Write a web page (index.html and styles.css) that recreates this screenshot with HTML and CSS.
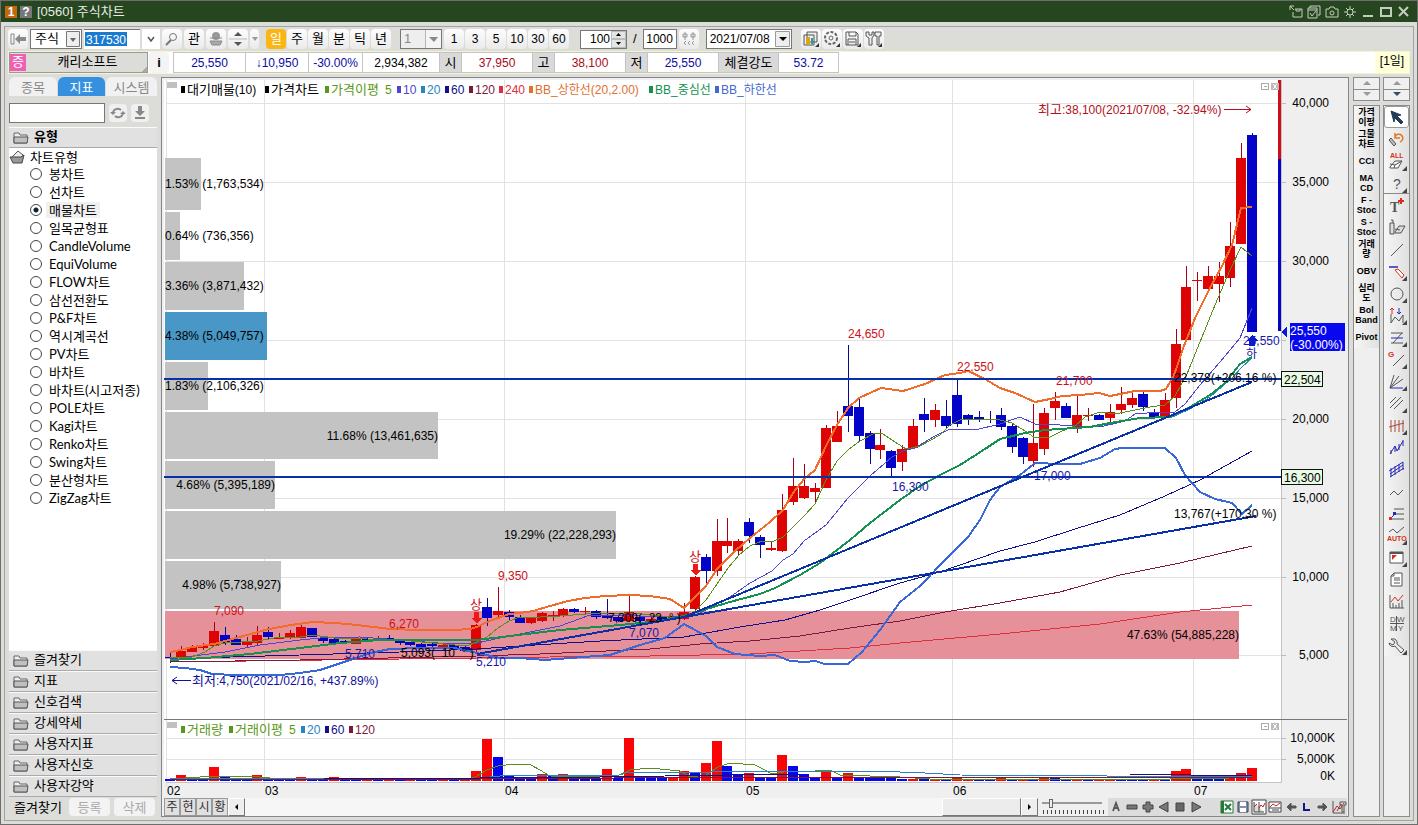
FILE: index.html
```html
<!DOCTYPE html>
<html lang="ko">
<head>
<meta charset="utf-8">
<title>[0560] 주식차트</title>
<link rel="stylesheet" href="styles.css">
</head>
<body>
<div class="window">
  <header class="titlebar">
    <span class="badge badge-num">1</span><span class="badge badge-help">?</span>
    <h1>[0560] 주식차트</h1>
    <div class="win-tools">
      <svg width="14" height="14" viewBox="0 0 14 14"><path d="M1 5V1h4M1 1l4 4M6 4h7v8H4V7M7 4v2h4V4"/></svg>
      <svg width="14" height="14" viewBox="0 0 14 14"><path d="M3 3V1h10v9h-2M1 3h9v10H1zM1 5h9M3 8l2 3 4-5"/></svg>
      <svg width="14" height="14" viewBox="0 0 14 14"><path d="M1 4h3l1-2h4l1 2h3v8H1z"/><circle cx="7" cy="8" r="2"/></svg>
      <svg width="14" height="14" viewBox="0 0 14 14"><circle cx="7" cy="7" r="3"/><path d="M7 1v3M7 10v3M1 7h3M10 7h3M3 3l2 2M9 9l2 2M11 3L9 5M5 9l-2 2"/></svg>
      <svg class="wide" width="14" height="14" viewBox="0 0 14 14"><path d="M2 11h10"/></svg>
      <svg class="wide" width="14" height="14" viewBox="0 0 14 14"><path d="M2 3h10v8H2z"/></svg>
      <svg class="wide" width="14" height="14" viewBox="0 0 14 14"><path d="M2 2l9 9M11 2l-9 9"/></svg>
    </div>
  </header>
  <div class="frame">
    <div class="toolbar">
      <button class="tb" aria-label="처음"><svg width="16" height="14" viewBox="0 0 16 14"><path d="M1 2h3v10H1z" fill="none" stroke="#888"/><path d="M5 7l5-5v3h6v4h-6v3z" fill="#8a8a8a"/></svg></button>
      <select class="kind" aria-label="종류"><option>주식</option></select>
      <input class="code" aria-label="종목코드" value="317530">
      <button class="tb drop" aria-label="목록"><svg width="10" height="8" viewBox="0 0 10 8"><path d="M2 2l3 4 3-4" fill="none" stroke="#555" stroke-width="1.500"/></svg></button>
      <button class="tb" aria-label="검색"><svg width="14" height="14" viewBox="0 0 14 14"><circle cx="8" cy="5" r="3.500" fill="none" stroke="#777"/><path d="M6 8l-5 5" stroke="#777" stroke-width="2"/></svg></button>
      <button class="tb">관</button>
      <button class="tb" aria-label="전문가"><svg width="16" height="16" viewBox="0 0 16 16"><circle cx="8" cy="5" r="4" fill="#999"/><path d="M2 7h12" stroke="#888"/><path d="M2 10h12l-2 4H4z" fill="#aaa" stroke="#888"/></svg></button>
      <button class="tb" aria-label="위아래"><svg width="18" height="16" viewBox="0 0 18 16"><path d="M9 1l4 4H5zM9 15l4-4H5z" fill="#555"/><path d="M0 8h18" stroke="#bbb"/></svg></button>
      <button class="tb mini" aria-label="더보기"><svg width="8" height="6" viewBox="0 0 8 6"><path d="M1 1h6L4 5z" fill="#999"/></svg></button>
      <div class="group period">
        <button class="tb on">일</button><button class="tb">주</button><button class="tb">월</button><button class="tb">분</button><button class="tb">틱</button><button class="tb">년</button>
      </div>
      <select class="unit" aria-label="단위" disabled><option>1</option></select>
      <div class="group nums">
        <button class="tb">1</button><button class="tb">3</button><button class="tb">5</button><button class="tb">10</button><button class="tb">30</button><button class="tb">60</button>
      </div>
      <div class="spin"><input aria-label="표시 개수" value="100"><span class="steps"><button aria-label="증가"><svg width="7" height="4" viewBox="0 0 7 4"><path d="M1 3h5L3.500 0z"/></svg></button><button aria-label="감소"><svg width="7" height="4" viewBox="0 0 7 4"><path d="M1 1h5L3.500 4z"/></svg></button></span></div>
      <span class="slash">/</span>
      <input class="total" aria-label="전체 개수" value="1000">
      <button class="tb" aria-label="간격"><svg width="16" height="16" viewBox="0 0 16 16"><path d="M4 1v8M2 3h4v3H2zM12 1v8M10 3h4v3h-4zM5 10l-2 2 2 2M9 10l-2 2 2 2M13 10l-2 2 2 2" fill="none" stroke="#999"/></svg></button>
      <select class="date" aria-label="날짜"><option>2021/07/08</option></select>
      <div class="group tools">
        <button class="tb" aria-label="차트 복사"><svg width="18" height="18" viewBox="0 0 18 18"><path d="M5 2h10v10H5zM2 5h10v10H2z" fill="#eee" stroke="#555"/><path d="M5 9v5M7 7v7" stroke="#e8a500" stroke-width="2"/><path d="M10 8v6" stroke="#19a0b0" stroke-width="2"/><path d="M17 13v4h-4z" fill="#333"/></svg></button>
        <button class="tb" aria-label="설정"><svg width="18" height="18" viewBox="0 0 18 18"><circle cx="8" cy="8" r="6" fill="none" stroke="#666" stroke-width="2" stroke-dasharray="3 1.500"/><circle cx="8" cy="8" r="2" fill="none" stroke="#666"/><path d="M17 13v4h-4z" fill="#333"/></svg></button>
        <button class="tb" aria-label="저장"><svg width="18" height="18" viewBox="0 0 18 18"><path d="M2 2h10l2 2v11H2zM5 2v4h7V2M4 15V9h8v6M5 12h6" fill="none" stroke="#555"/><path d="M17 13v4h-4z" fill="#333"/></svg></button>
        <button class="tb" aria-label="도구"><svg width="18" height="18" viewBox="0 0 18 18"><path d="M1 2v4l3 2v7h3V8l2-3V2H7v3H4V2zM10 2h6v4h-2v9h-2V6h-2z" fill="#eee" stroke="#555"/><path d="M17 13v4h-4z" fill="#333"/></svg></button>
      </div>
    </div>

    <div class="inforow">
      <div class="stock"><span class="tag">증</span><span class="name">캐리소프트</span></div>
      <button class="info">i</button>
      <div class="quote">
        <span class="c72 blue">25,550</span><span class="c63 blue">↓10,950</span><span class="c54 blue">-30.00%</span><span class="c77">2,934,382</span><b class="c22">시</b><span class="c71 red">37,950</span><b class="c22">고</b><span class="c71 red">38,100</span><b class="c22">저</b><span class="c71 blue">25,550</span><b class="c60">체결강도</b><span class="c60 blue">53.72</span>
      </div>
      <span class="term">[1일]</span>
    </div>

    <main class="main">
      <aside class="side">
        <nav class="tabs"><button>종목</button><button class="on">지표</button><button>시스템</button></nav>
        <div class="find">
          <input aria-label="지표 검색">
          <button aria-label="새로고침"><svg width="16" height="14" viewBox="0 0 16 14"><path d="M3 6a5 5 0 0 1 8-2M13 8a5 5 0 0 1-8 2" fill="none" stroke="#888" stroke-width="2"/><path d="M0 6h6L3 9zM10 8h6l-3-3z" fill="#888"/></svg></button>
          <button aria-label="내려받기"><svg width="14" height="16" viewBox="0 0 14 16"><path d="M5 1h4v5h3l-5 5-5-5h3z" fill="#888"/><path d="M2 13h10" stroke="#888" stroke-width="2"/></svg></button>
        </div>
        <h2 class="acc first"><svg class="folder" width="16" height="13" viewBox="0 0 16 13"><path d="M1 12V2h5l1 2h7v8z" fill="#eee" stroke="#666"/><path d="M1 12V6h14l-1 6z" fill="#c0c0c0" stroke="#555"/></svg>유형</h2>
        <div class="tree">
          <p class="root"><svg width="16" height="14" viewBox="0 0 16 14"><path d="M3 7l6-6 5 4-2 5z" fill="#eee" stroke="#555"/><path d="M1 7h11l3-2-2 8H4z" fill="#999" stroke="#444"/></svg>차트유형</p>
          <label><input type="radio" name="type"><span>봉차트</span></label>
          <label><input type="radio" name="type"><span>선차트</span></label>
          <label><input type="radio" name="type" checked><span class="sel">매물차트</span></label>
          <label><input type="radio" name="type"><span>일목균형표</span></label>
          <label><input type="radio" name="type"><span>CandleVolume</span></label>
          <label><input type="radio" name="type"><span>EquiVolume</span></label>
          <label><input type="radio" name="type"><span>FLOW차트</span></label>
          <label><input type="radio" name="type"><span>삼선전환도</span></label>
          <label><input type="radio" name="type"><span>P&amp;F차트</span></label>
          <label><input type="radio" name="type"><span>역시계곡선</span></label>
          <label><input type="radio" name="type"><span>PV차트</span></label>
          <label><input type="radio" name="type"><span>바차트</span></label>
          <label><input type="radio" name="type"><span>바차트(시고저종)</span></label>
          <label><input type="radio" name="type"><span>POLE차트</span></label>
          <label><input type="radio" name="type"><span>Kagi차트</span></label>
          <label><input type="radio" name="type"><span>Renko차트</span></label>
          <label><input type="radio" name="type"><span>Swing차트</span></label>
          <label><input type="radio" name="type"><span>분산형차트</span></label>
          <label><input type="radio" name="type"><span>ZigZag차트</span></label>
        </div>
        <h2 class="acc"><svg class="folder" width="16" height="13" viewBox="0 0 16 13"><path d="M1 12V2h5l1 2h7v8z" fill="#eee" stroke="#666"/><path d="M1 12V6h14l-1 6z" fill="#c0c0c0" stroke="#555"/></svg>즐겨찾기</h2>
        <h2 class="acc"><svg class="folder" width="16" height="13" viewBox="0 0 16 13"><path d="M1 12V2h5l1 2h7v8z" fill="#eee" stroke="#666"/><path d="M1 12V6h14l-1 6z" fill="#c0c0c0" stroke="#555"/></svg>지표</h2>
        <h2 class="acc"><svg class="folder" width="16" height="13" viewBox="0 0 16 13"><path d="M1 12V2h5l1 2h7v8z" fill="#eee" stroke="#666"/><path d="M1 12V6h14l-1 6z" fill="#c0c0c0" stroke="#555"/></svg>신호검색</h2>
        <h2 class="acc"><svg class="folder" width="16" height="13" viewBox="0 0 16 13"><path d="M1 12V2h5l1 2h7v8z" fill="#eee" stroke="#666"/><path d="M1 12V6h14l-1 6z" fill="#c0c0c0" stroke="#555"/></svg>강세약세</h2>
        <h2 class="acc"><svg class="folder" width="16" height="13" viewBox="0 0 16 13"><path d="M1 12V2h5l1 2h7v8z" fill="#eee" stroke="#666"/><path d="M1 12V6h14l-1 6z" fill="#c0c0c0" stroke="#555"/></svg>사용자지표</h2>
        <h2 class="acc"><svg class="folder" width="16" height="13" viewBox="0 0 16 13"><path d="M1 12V2h5l1 2h7v8z" fill="#eee" stroke="#666"/><path d="M1 12V6h14l-1 6z" fill="#c0c0c0" stroke="#555"/></svg>사용자신호</h2>
        <h2 class="acc"><svg class="folder" width="16" height="13" viewBox="0 0 16 13"><path d="M1 12V2h5l1 2h7v8z" fill="#eee" stroke="#666"/><path d="M1 12V6h14l-1 6z" fill="#c0c0c0" stroke="#555"/></svg>사용자강약</h2>
        <div class="favs"><span>즐겨찾기</span><button disabled>등록</button><button disabled>삭제</button></div>
      </aside>

      <section class="panel">
        <svg id="chart" class="chart" viewBox="164 80 1183 718" role="img" aria-label="캐리소프트 일봉 차트"></svg>
        <div class="bottombar">
          <div class="modes"><button>주</button><button>현</button><button>시</button><button>황</button></div>
          <button class="arrow" aria-label="왼쪽"><svg width="5" height="8" viewBox="0 0 5 8"><path d="M4 1v6L1 4z"/></svg></button>
          <div class="track"><span class="thumb"></span></div>
          <button class="arrow" aria-label="오른쪽"><svg width="5" height="8" viewBox="0 0 5 8"><path d="M1 1v6l3-3z"/></svg></button>
          <div class="zoomer"><input type="range" aria-label="확대" value="12"></div>
          <div class="icons left">
            <svg width="16" height="16" viewBox="0 0 16 16"><path d="M5 12l3-8 3 8M6 9h4" fill="none" stroke="#555" stroke-width="1.800"/></svg>
            <svg width="16" height="16" viewBox="0 0 16 16"><path d="M3 6h10v4H3z" fill="#777" stroke="#444"/></svg>
            <svg width="16" height="16" viewBox="0 0 16 16"><path d="M6 3h4v3h3v4h-3v3H6v-3H3V6h3z" fill="#777" stroke="#444"/></svg>
            <svg width="16" height="16" viewBox="0 0 16 16"><path d="M12 3v10L3 8z" fill="#777" stroke="#444"/></svg>
            <svg width="16" height="16" viewBox="0 0 16 16"><path d="M4 4h8v8H4z" fill="#666" stroke="#444"/></svg>
            <svg width="16" height="16" viewBox="0 0 16 16"><path d="M4 3v10l9-5z" fill="#777" stroke="#444"/></svg>
          </div>
          <div class="icons right">
            <svg width="16" height="16" viewBox="0 0 16 16"><path d="M2 2h12v12H2z" fill="#fff" stroke="#257a35"/><path d="M2 2h3v12H2z" fill="#257a35"/><path d="M6 5l6 6M12 5l-6 6" stroke="#257a35" stroke-width="2"/></svg>
            <svg width="16" height="16" viewBox="0 0 16 16"><path d="M3 3h10v10H3z" fill="#8292ad" stroke="#333f55"/><path d="M5 3h6v4H5zM5 9h6v4H5z" fill="#fff"/></svg>
            <svg width="16" height="16" viewBox="0 0 16 16"><path d="M1 1h14v14H1zM3 3v10h10M8 3v10" fill="#fff" stroke="#444"/><path d="M3 8l3-3M8 9l2-3 2 2 2-4" fill="none" stroke="#d02020"/></svg>
            <svg width="16" height="16" viewBox="0 0 16 16"><path d="M2 3h12v10H2zM2 9h12M5 11h7" fill="#fff" stroke="#444"/><path d="M3 8l3-3 3 2 4-3" fill="none" stroke="#d02020"/></svg>
            <svg width="16" height="16" viewBox="0 0 16 16"><path d="M4 8l4-4v3h5v2H8v3z" fill="#555" stroke="#555"/></svg>
            <svg width="16" height="16" viewBox="0 0 16 16"><path d="M5 4v7h6" fill="none" stroke="#14148c" stroke-width="2"/></svg>
            <svg width="16" height="16" viewBox="0 0 16 16"><path d="M12 8L8 4v3H3v2h5v3z" fill="#555" stroke="#555"/></svg>
            <svg width="16" height="16" viewBox="0 0 16 16"><path d="M2 2v12h12M6 12l4-7M9 3h6v3h-2v7h-2V6H9z" fill="none" stroke="#555"/><path d="M2 13l4-6 3 3 4-6" fill="none" stroke="#d02020"/></svg>
          </div>
        </div>
      </section>

      <div class="rail words">
        <div class="pager"><button aria-label="위"><svg width="10" height="5" viewBox="0 0 10 5"><path d="M1 4h8L5 0z" fill="#999"/></svg></button><button aria-label="아래"><svg width="10" height="5" viewBox="0 0 10 5"><path d="M1 0h8L5 4z" fill="#999"/></svg></button></div>
        <div class="list">
          <button>가격<br>이평</button><button>그물<br>차트</button><button>CCI</button><button>MA<br>CD</button><button>F -<br>Stoc</button><button>S -<br>Stoc</button><button>거래<br>량</button><button>OBV</button><button>심리<br>도</button><button>Bol<br>Band</button><button>Pivot</button>
        </div>
      </div>
      <div class="rail draw">
        <div class="pager"><button aria-label="위"><svg width="10" height="5" viewBox="0 0 10 5"><path d="M1 4h8L5 0z" fill="#999"/></svg></button><button aria-label="아래"><svg width="10" height="5" viewBox="0 0 10 5"><path d="M1 0h8L5 4z" fill="#334a6a"/></svg></button></div>
        <div class="list" id="drawTools"></div>
      </div>
    </main>
  </div>
</div>
<script src="chart.js"></script>
</body>
</html>
```

FILE: styles.css
```css
* { box-sizing: border-box; }
body {
  margin: 0;
  font: 12px/16px "Liberation Sans", "Noto Sans CJK KR", sans-serif;
  color: #000;
}
button, input, select { font: inherit; color: inherit; margin: 0; padding: 0; border-radius: 0; }
button { border: 0; background: none; display: flex; align-items: center; justify-content: center; }
svg { display: block; flex: none; }

.window { display: flex; flex-direction: column; min-height: 100vh; border: 1px solid #6e6e6e; background: #dcdcd8; }
.titlebar { display: flex; align-items: center; height: 21px; padding: 0 6px 0 4px; background: #25461e; color: #e8ece6; }
.badge { width: 12px; height: 12px; margin-right: 3px; font-weight: bold; line-height: 12px; text-align: center; color: #fff; }
.badge-num { background: #c4680e; }
.badge-help { background: #777; }
.titlebar h1 { margin: 0 0 0 2px; font-size: 13px; font-weight: normal; }
.win-tools { display: flex; gap: 4px; margin-left: auto; }
.win-tools svg { fill: none; stroke: #c5cdc0; }
.win-tools .wide { stroke-width: 2; }

.frame { flex: 1; display: flex; flex-direction: column; margin: 4px 3px 3px; padding: 0 3px 3px; border: 1px solid #a2a2a2; }

.toolbar { display: flex; align-items: center; height: 24px; gap: 2px; font-size: 13px; }
.tb { width: 20px; height: 20px; border-radius: 4px; background: linear-gradient(#fdfdfd, #eaeaea); }
.nums .tb { font-size: 12px; }
.tb.on { background: #fbb614; color: #fff; }
.group { display: flex; gap: 1px; }
.period { margin-left: 5px; }
.toolbar .drop { width: 18px; background: #fff; border-radius: 0; }
.toolbar .mini { width: 9px; }
select { appearance: none; border: 1px solid #777; background-color: #fff; height: 20px; }
select.kind { width: 52px; padding-left: 4px; background: #fff url("data:image/svg+xml,%3Csvg xmlns='http://www.w3.org/2000/svg' width='14' height='16'%3E%3Cpath d='M.5.500h13v15H.5z' fill='%23eee' stroke='%23777'/%3E%3Cpath d='M4 7h6l-3 4z' fill='%23666'/%3E%3C/svg%3E") no-repeat right 1px center; }
.code { width: 56px; height: 20px; padding-left: 2px; border: 0; border-top: 1px solid #777; background: linear-gradient(#1a7ad0, #1a7ad0) no-repeat 1px 2px / 42px 14px #fff; color: #fff; font-size: 12px; }
select.unit { width: 42px; margin-left: 7px; padding-left: 3px; opacity: 1; color: #888; background: #eee url("data:image/svg+xml,%3Csvg xmlns='http://www.w3.org/2000/svg' width='16' height='18'%3E%3Cpath d='M0 0h16v18H0z' fill='%23f4f4f4'/%3E%3Cpath d='M0 0v18' stroke='%23777'/%3E%3Cpath d='M4 7h9l-4 5z' fill='%23888'/%3E%3C/svg%3E") no-repeat right center; }
.spin { display: flex; width: 47px; height: 19px; margin-left: 9px; border: 1px solid #777; background: #fff; }
.spin input { width: 29px; border: 0; text-align: right; font-size: 12px; background: none; }
.steps { display: flex; flex-direction: column; flex: 1; margin-left: 1px; }
.steps button { flex: 1; background: #e4e4e4; border: 1px solid #bbb; }
.slash { margin: 0 4px; }
.total { width: 34px; height: 20px; border: 1px solid #777; background: #fff; text-align: center; font-size: 12px; }
select.date { width: 86px; margin-left: 5px; padding-left: 3px; font-size: 12px; background: #fff url("data:image/svg+xml,%3Csvg xmlns='http://www.w3.org/2000/svg' width='15' height='16'%3E%3Cpath d='M.5.500h14v15H.5z' fill='%23eee' stroke='%23999'/%3E%3Cpath d='M4 6h8l-4 4z'/%3E%3C/svg%3E") no-repeat right 1px center; }
.tools { margin-left: 7px; }

.inforow { display: flex; height: 23px; background: #fff; border: 1px solid #f4f4cf; }
.stock { display: flex; width: 139px; border: 1px solid #999; background: #dcdcd8; }
.stock .tag { width: 16px; margin: 1px 0; background: #ef5fb4; color: #fff; text-align: center; font-size: 13px; }
.stock .name { flex: 1; padding-left: 2px; text-align: center; font-size: 13px; line-height: 18px; background: linear-gradient(315deg, #aaa 4px, transparent 4px); }
.info { width: 20px; margin: 0 1px; background: #f4f4f4; border-radius: 4px; font-weight: bold; font-size: 13px; }
.quote { display: flex; margin-left: 3px; border: 1px solid #c4c4c4; border-left: 0; line-height: 20px; }
.quote span, .quote b { border-left: 1px solid #c4c4c4; text-align: center; }
.quote b { background: #d9d9d9; font-weight: normal; font-size: 13px; }
.c22 { width: 22px; } .c54 { width: 54px; } .c60 { width: 60px; } .c63 { width: 63px; }
.c71 { width: 71px; } .c72 { width: 72px; } .c77 { width: 77px; }
.blue { color: #0b0ba4; }
.red { color: #a80c18; }
.term { width: 34px; margin-left: auto; background: #ffffd8; text-align: center; line-height: 18px; }

.main { flex: 1; display: grid; grid-template-columns: 150px minmax(0, 1fr) 27px 27px; gap: 3px; margin-top: 3px; }

.side { display: flex; flex-direction: column; padding: 0 1px; font: 13px/18px Lato, "Noto Sans CJK KR", sans-serif; }
.tabs { display: grid; grid-template-columns: 48px 47px 1fr; gap: 1px; height: 19px; }
.tabs button { border-radius: 6px 6px 0 0; background: #f1f1f1; color: #888; line-height: 16px; }
.tabs .on { background: #3590e0; color: #fff; }
.find { display: flex; align-items: center; gap: 4px; height: 31px; padding-top: 3px; }
.find input { width: 96px; height: 20px; border: 1px solid #777; background: #fff; }
.find button { width: 18px; height: 18px; border-radius: 4px; background: #f0f0f0; }
.acc { display: flex; align-items: center; gap: 5px; height: 21px; margin: 0; padding: 0 4px 4px; border-top: 1px solid #fafafa; border-bottom: 1px solid #aaa; background: #e1e1e1; font: inherit; }
.acc.first { font-weight: bold; }
.acc .folder { margin-top: 3px; }
.tree { flex: 1; background: #fff; }
.root { display: flex; align-items: center; gap: 5px; margin: 0; height: 17px; line-height: 16px; }
.tree label { display: flex; align-items: center; gap: 4px; height: 18px; padding-left: 21px; }
.tree input { appearance: none; width: 12px; height: 12px; flex: none; border: 1px solid #444; border-radius: 6px; background: #fff; }
.tree input:checked { background: radial-gradient(circle, #123 0 2px, #fff 3px); }
.tree label span { padding: 0 3px; line-height: 16px; }
.tree .sel { background: #f0f0f0; }
.favs { display: flex; align-items: center; gap: 4px; height: 20px; padding-left: 5px; line-height: 16px; }
.favs span { width: 51px; }
.favs button { width: 41px; height: 18px; border-radius: 4px; background: #f3f3f3; color: #aaa; }

.panel { display: flex; flex-direction: column; padding: 2px 1px 0 2px; border: 1px solid #85858f; background: #efefef; min-width: 0; margin-right: 1px; }
.chart { flex: 1; width: 100%; min-height: 0; }
.chart text { font: 12px "Liberation Sans", "Noto Sans CJK KR", sans-serif; white-space: pre; }
.chart .ko { font-size: 13px; }
.bottombar { display: flex; height: 18px; background: #dcdcdc; }
.modes { display: flex; }
.modes button { width: 16px; border: 1px solid #999; background: #e0e0e0; color: #333; font-size: 12px; }
.arrow { width: 17px; border: 1px solid; border-color: #fff #777 #777 #fff; background: #eee; }
.track { flex: 1; display: flex; justify-content: flex-end; background: #f6f6f6; }
.thumb { width: 79px; border: 1px solid; border-color: #fff #777 #777 #fff; background: #ececec; }
.zoomer { width: 70px; padding: 0 4px; background: repeating-linear-gradient(90deg, #444 0 1px, transparent 1px 4px) no-repeat 5px 12px / 62px 4px #efefef; }
.zoomer input { appearance: none; display: block; width: 60px; height: 10px; background: linear-gradient(#999, #999) no-repeat 0 4px / 100% 2px; }
.zoomer input::-webkit-slider-thumb { appearance: none; width: 4px; height: 9px; background: #eee; border: 1px solid #666; }
.icons { display: flex; align-items: center; }
.icons.right { margin-left: 15px; }

.rail { display: flex; flex-direction: column; gap: 4px; }
.pager { height: 24px; display: flex; flex-direction: column; border: 1px solid #8c8c8c; }
.pager button { flex: 1; background: #f0f0f0; }
.pager button + button { border-top: 1px solid #8c8c8c; }
.list { flex: 1; border: 1px solid #8c8c8c; background: #efefef; }
.list button { width: 100%; height: 22px; background: linear-gradient(90deg, #f6f6f6, #e0e0e0); }
.words .list button { font: bold 9px/10px "Liberation Sans", "Noto Sans CJK KR", sans-serif; text-align: center; }
.draw .list button:first-child { border: 1px solid #999; border-radius: 3px; background: #fff; }
.draw .list button:nth-child(4) { border-bottom: 1px solid #888; }
```

FILE: chart.js
```js
// Geometry shared by every series of the chart
const X0 = 170, STEP = 10.93;
const cx = i => Math.round(X0 + STEP * i);

// One entry per day: colour, body top, body bottom, high, low
const candles = `b657,658,652,663 r651,658,646,658 r647,652,645,652 r646,648,643,650 r631,646,622,646 b635,643,627,645 b639,645,635,645 r641,645,637,647 r635,643,626,646 b632,637,627,639
r637,639,633,639 r633,638,630,639 r627,638,624,638 b628,637,628,637 b638,641,636,643 b639,644,638,645 b641,643,640,643 r639,644,639,644 b639,640,638,641 r638,639,636,640
b638,639,635,640 b641,643,640,645 b642,645,642,646 b644,647,643,647 b644,646,643,647 r645,647,644,648 b645,648,644,649 b647,651,646,651 r625,650,624,652 b607,618,598,626
r611,615,587,617 b612,617,610,621 b617,623,615,623 r618,623,617,624 r613,621,612,622 r615,617,611,621 r609,616,608,617 b609,612,608,613 r611,612,607,614 b611,617,610,619
b616,618,599,619 b617,621,615,622 r612,621,595,622 b617,621,616,622 r619,621,617,622 b617,620,616,621 r617,619,616,620 r612,619,603,620 r577,609,576,610 b557,571,554,586
r541,571,519,576 r541,546,518,553 r541,551,539,555 b522,536,518,543 b537,545,535,558 r548,550,542,551 r510,551,494,552 r486,502,458,505 r486,498,464,499 r488,492,483,502
r428,488,425,488 r426,442,411,442 b406,416,345,432 b407,436,398,442 b433,449,431,464 r445,450,429,459 b451,468,450,476 r449,462,445,471 r426,448,419,449 b414,420,398,432
r410,420,404,427 b416,426,400,428 b395,424,380,427 b415,420,414,425 b417,419,411,422 b419,420,411,423 b415,427,408,430 b426,447,423,453 b438,457,437,464 r443,461,404,467
r413,449,408,455 r401,408,392,420 b406,418,403,418 r415,427,396,433 r415,416,408,421 b415,420,414,420 r412,418,404,422 r404,410,387,414 r398,405,390,408 b394,407,391,411
b412,418,409,418 r400,416,393,418 r344,398,329,408 r287,340,266,340 r280,281,272,301 r276,289,266,292 r276,284,262,302 r246,278,222,287 r158,244,143,244 b135,332,133,332`.split(/\s+/);

// Bar heights of the volume pane
const volumes = `b2 r6 b3 b3 r14 b5 b3 b3 r6 b3 b2 b2 r4 b3 b2 r4 b2 b2 r2 b2 r2 b3 r3 b2 b2 r2 b2 r2 r10 r42 b24 b5 b4 b3 r7 b5 r7 b3 b3 b3 r12 b3 r43 b5 b5 b3 r3 r10 b8 r18 r40 b15 b6 r8 b3 b3 r26 b15 b7 b3 r11 b3 r8 b4 b3 b3 b3 b2 r2 b2 r2 b2 r4 r2 b2 b2 r3 b2 r2 b2 r4 b4 b2 r2 b2 r2 r2 b2 b2 b2 r2 b2 r10 r12 b2 b2 b2 r4 r8 r13`.split(' ');

const lines = [
  ['#dd3040', 1, '170,662 400,659 477,658 550,657 650,656 750,654 850,648 900,643 1000,634 1100,624 1180,612 1252,605'],
  ['#7b1840', 1, '170,662 300,660 477,656 540,654 650,649 700,644 750,641 800,636 850,628 900,621 945,612 1000,603 1060,592 1120,575 1180,563 1252,546'],
  ['#10108c', 1, '170,660 230,657 300,655 400,652 477,649 535,645 600,641 684,637 740,627 785,620 820,610 850,600 900,583 940,572 980,558 1000,551 1035,542 1075,529 1120,515 1165,496 1200,480 1252,451'],
  ['#4b45cf', 1, '170,659 225,652 260,645 300,640 320,638 360,637 400,640 450,644 477,643 500,638 530,632 560,626 590,615 620,615 660,617 690,616 700,613 730,597 750,583 772,571 783,560 793,554 804,541 826,525 848,498 870,476 892,457 903,451 915,448 935,436 950,429 975,430 1000,424 1020,417 1035,424 1060,425 1100,427 1125,421 1135,414 1160,412 1175,412 1185,404 1200,385 1220,362 1240,338 1252,308'],
  ['#5a8f1c', 1, '170,658 192,657 205,652 214,646 225,643 258,641 280,637 300,637 313,635 335,638 367,639 400,640 433,643 466,646 477,642 487,637 498,628 509,621 520,617 540,617 560,616 600,613 640,614 670,617 684,618 695,611 706,600 717,584 728,568 739,555 750,546 762,541 772,542 783,537 793,527 804,516 815,504 826,480 837,461 848,450 860,441 875,433 883,434 895,442 906,449 920,446 940,435 950,425 960,420 975,419 1000,420 1012,423 1025,431 1035,438 1050,437 1062,431 1075,426 1085,417 1100,412 1115,414 1130,411 1150,407 1165,405 1175,396 1187,374 1200,342 1215,305 1230,270 1241,247 1252,256'],
  ['#2585c5', 1, '1170,418 1190,409 1210,397 1232,378 1242,367 1252,358'],
  ['#149050', 2, '170,660 205,658 250,654 300,648 340,643 380,640 420,640 477,640 510,636 560,630 620,625 660,621 684,616 700,611 730,602 760,594 775,588 800,575 820,563 850,540 870,523 900,500 920,486 940,475 960,465 985,449 1000,439 1025,433 1045,430 1090,427 1110,423 1140,418 1170,417 1190,407 1210,395 1225,383 1240,364 1252,357'],
  ['#f06c28', 2, '170,652 181,650 192,647 214,644 225,641 247,635 269,629 291,625 313,622 335,623 357,625 390,629 420,630 455,630 470,629 477,627 487,622 498,618 509,614 520,613 533,611 550,606 568,601 585,598 605,596 630,595 650,596 670,599 684,608 690,602 706,586 717,569 735,551 750,538 770,522 783,510 793,493 804,479 815,470 826,446 837,425 848,408 859,398 870,393 881,388 903,391 925,384 945,375 960,373 968,371 985,379 1000,388 1015,393 1035,402 1050,399 1062,396 1080,395 1099,393 1110,396 1135,391 1160,391 1166,389 1174,375 1185,343 1196,316 1210,288 1222,266 1232,245 1241,208 1252,207'],
  ['#3868d8', 2, '170,667 185,668 200,670 212,674 235,675 280,675 300,673 320,670 335,665 350,660 370,653 390,649 420,648 455,648 477,653 500,658 520,658 545,660 570,658 610,655 640,645 665,638 684,624 695,630 706,636 717,647 735,654 760,656 775,655 790,661 805,662 815,661 825,664 848,664 862,652 880,630 900,602 920,586 946,559 968,537 980,520 990,500 1000,487 1020,475 1035,463 1060,464 1080,464 1100,458 1115,449 1122,448 1165,448 1176,458 1185,475 1200,492 1215,499 1232,503 1242,514 1252,505'],
  ['#0830a8', 2, '477,654 684,617 1252,382'],
  ['#0830a8', 2, '684,617 1256,516'],
  ['#0830a8', 2, '164,379 1281,379'],
  ['#0830a8', 2, '164,477 1281,477'],
  ['#5a8f1c', 1, '170,779 200,777 214,776 250,776 270,778 400,779 470,779 477,776 487,770 498,766 515,764 531,765 540,770 550,776 615,777 630,770 650,768 680,771 690,777 706,775 718,767 730,763 755,765 765,770 772,774 790,771 815,771 830,770 840,775 900,777 930,779 1170,779 1230,778 1252,776'],
  ['#2585c5', 1, '170,779 480,778 500,776 620,775 628,772 700,773 720,771 790,771 850,771 900,772 925,773 960,775 1252,777'],
  ['#10108c', 1, '170,780 480,778 600,777 730,775 800,774 1130,774 1252,776'],
  ['#7b1840', 1, '170,780 480,779 750,777 1130,777 1252,777']
];

// Volume at price: bar end, top, height, label
const zones = [
  [201, 158, 52, '1.53% (1,763,534)'], [180, 212, 48, '0.64% (736,356)'], [244, 262, 48, '3.36% (3,871,432)'],
  [267, 312, 48, '4.38% (5,049,757)'], [208, 362, 48, '1.83% (2,106,326)'], [438, 412, 47, '11.68% (13,461,635)'],
  [275, 461, 48, '4.68% (5,395,189)'], [616, 511, 48, '19.29% (22,228,293)'], [281, 561, 48, '4.98% (5,738,927)'],
  [1239, 611, 48, '47.63% (54,885,228)']
];

const out = [];
const rect = (x, y, w, h, fill, extra = '') => out.push(`<rect x="${x}" y="${y}" width="${w}" height="${h}" fill="${fill}" ${extra}/>`);
const text = (x, y, s, fill = '#000', cls = '', anchor = 'start') => {
  const body = cls === 'mix' ? s.replace(/[가-힣]+/g, m => `<tspan class="ko">${m}</tspan>`) : s;
  out.push(`<text x="${x}" y="${y}" fill="${fill}" class="${cls}" text-anchor="${anchor}">${body}</text>`);
};

out.push('<g shape-rendering="crispEdges">');
rect(164, 80, 1117, 702, '#fff');
for (const x of [166, 264, 504, 745, 952, 1193]) rect(x, 80, 1, 707, '#e2e2e2');
for (const y of [103, 182, 261, 340, 419, 498, 577, 655, 738, 759]) { rect(166, y, 1115, 1, '#e2e2e2'); rect(1281, y, 5, 1, '#bbb'); }
rect(1281, 80, 1, 703, '#c4c4c4');
rect(164, 719, 1183, 1, '#777');
rect(166, 782, 1116, 1, '#c4c4c4');
zones.forEach(([r, y, h], i) => rect(165, y, r - 165, h, i === 9 ? '#e6919a' : i === 3 ? '#4897c6' : '#c3c3c3'));
volumes.forEach((v, i) => rect(cx(i) - 5, 781 - v.slice(1), 10, v.slice(1), v[0] === 'r' ? '#fa0505' : '#0505f0'));
candles.forEach((c, i) => {
  const [t, b, hi, lo] = c.slice(1).split(',').map(Number);
  const up = c[0] === 'r';
  rect(cx(i), hi, 1, lo - hi, up ? '#a80010' : '#080890');
  rect(cx(i) - 5, t, 10, b - t, up ? '#de0404' : '#0404c8');
});
for (const [col, w, pts] of lines) out.push(`<polyline points="${pts}" fill="none" stroke="${col}" stroke-width="${w}"/>`);
rect(1278, 80, 3, 79, '#d00c18');
rect(1278, 159, 3, 172, '#0404c8');
rect(167, 82, 10, 6, '#c0c0c0');
rect(167, 722, 10, 6, '#c0c0c0');
for (const y of [83, 723]) out.push(`<path d="M1261.500 ${y}.500h7v6h-7zM1264 ${y + 3}.500h3" fill="#fff" stroke="#aaa"/><path d="M1271 ${y}h8v7h-8z" fill="#bbb"/><path d="M1273 ${y + 1}l4 5M1277 ${y + 1}l-4 5" stroke="#fff"/>`);
out.push('<path d="M1287 326v11l-6-5zM1252 335l6 6h-3v5h-6v-5h-3z" fill="#0c18e0"/>');
out.push('<path d="M693 564h5v6h3l-5 5-6-5h3zM474 612h5v6h3l-5 5-6-5h3z" fill="#ee1818"/>');
rect(1290, 323, 55, 28, '#0808f0');
for (const y of [371, 469]) rect(1281.5, y + .5, 41, 15, '#e8fbe4', 'stroke="#111"');
out.push('</g>');

zones.forEach(([r, y, , s], i) => {
  const base = y + (i === 0 ? 30 : 28);
  if (i < 5) text(165, base, s); else text(r, base, s, '#000', '', 'end');
});

const key = (x, y, col, s, cls = 'mix') => { rect(x, y - 8, 4, 7, col); text(x + 6, y, s, col, cls); };
[[181, '#000', '대기매물(10)'], [265, '#000', '가격차트'], [325, '#5a9818', '가격이평'], [397, '#4b45cf', '10'], [421, '#2585c5', '20'], [445, '#10108c', '60'],
 [469, '#7b1840', '120'], [499, '#dd3040', '240'], [529, '#e07030', 'BB_상한선(20,2.00)', ''], [649, '#149050', 'BB_중심선', ''], [715, '#4068d0', 'BB_하한선', '']].forEach(([x, c, s, k]) => key(x, 94, c, s, k));
text(385, 94, '5', '#5a9818');
[[181, '#5a9818', '거래량'], [229, '#5a9818', '거래이평'], [301, '#2585c5', '20'], [325, '#10108c', '60'], [349, '#7b1840', '120']].forEach(([x, c, s]) => key(x, 734, c, s));
text(289, 734, '5', '#5a9818');

[['40,000', 107], ['35,000', 186], ['30,000', 265], ['20,000', 423], ['15,000', 502], ['10,000', 581], ['5,000', 659]].forEach(([s, y]) => text(1329, y, s, '#000', '', 'end'));
[['10,000K', 742], ['5,000K', 763], ['0K', 780]].forEach(([s, y]) => text(1335, y, s, '#000', '', 'end'));
[['02', 167], ['03', 265], ['04', 505], ['05', 746], ['06', 953], ['07', 1194]].forEach(([s, x]) => text(x, 795, s));
text(1284, 384, '22,504'); text(1284, 482, '16,300');
text(1290, 335, '25,550', '#fff'); text(1290, 349, '(-30.00%)', '#fff');

text(1038, 114, '최고:38,100(2021/07/08, -32.94%)', '#b01020', 'mix');
out.push('<path d="M1224 109.500h27M1246 106l5 3.500-5 3.500" fill="none" stroke="#b01020"/>');
text(192, 685, '최저:4,750(2021/02/16, +437.89%)', '#10109c', 'mix');
out.push('<path d="M191 680.500h-19M177 677l-5 3.500 5 3.500" fill="none" stroke="#10109c"/>');
const RED = '#cc1018', BLU = '#1818a8';
[[214, 615, '7,090', RED], [389, 628, '6,270', RED], [498, 580, '9,350', RED], [848, 338, '24,650', RED], [957, 371, '22,550', RED], [1056, 385, '21,700', RED],
 [345, 658, '5,710', BLU], [476, 666, '5,210', BLU], [629, 637, '7,070', BLU], [892, 491, '16,300', BLU], [1034, 480, '17,000', BLU], [1243, 345, '25,550', BLU]].forEach(([x, y, s, c]) => text(x, y, s, c));
text(470, 609, '상', '#cc1018', 'mix'); text(689, 561, '상', '#cc1018', 'mix'); text(1246, 358, '하', '#1818a8');
text(401, 657, '5,093(  10  ° )'); text(608, 622, '7,309(  23  ° )');
text(1174, 382, '22,378(+206.16 %)'); text(1174, 518, '13,767(+170.30 %)');
document.getElementById('chart').innerHTML = out.join('');

// Drawing tools of the right rail: label and strokes
const G = '#555', R = '#d83018', B = '#2828b8';
const p = (d, stroke = G, fill = 'none', w = 1) => `<path d="${d}" stroke="${stroke}" fill="${fill}" stroke-width="${w}"/>`;
const tri = '<path d="M21 15v5h-5z" fill="#444"/>';
const tools = [
  ['선택', p('M5 4l10 4-4 1 6 6-2 2-6-6-1 4z', '#223c58', '#223c58')],
  ['되돌리기', p('M9 8a4 4 0 1 1 5 5M9 4v5h5', '#e07820', 'none', 1.5) + p('M3 11l5 6 2-2-5-6z', G, '#bbb')],
  ['모두 지우기', `<text x="4" y="7" font-size="7" font-weight="bold" fill="${R}">ALL</text>` + p('M4 16l5-6h7l-4 7H4zM4 13l5 1 7-4M9 14l-1 3', G, '#fff') + tri],
  ['도움말', `<text x="7" y="16" font-size="14" fill="#555">?</text>` + tri],
  ['문자', `<text x="4" y="17" font-family="Liberation Serif" font-weight="bold" font-size="14" fill="#555">T</text>` + p('M15 3v6M12 6h6', R, 'none', 2)],
  ['지우개', p('M4 6h4v11H4zM5 3h2v3M9 15l4-6h6l-4 7h-6zM9 12l5 1', G, '#ddd')],
  ['추세선', p('M5 17L17 5')],
  ['수평선', p('M3 6h9', B, 'none', 1.5) + p('M9 9l3-1 6 6-2 3z', R, '#fff') + tri],
  ['원', '<circle cx="11" cy="11" r="6" fill="none" stroke="#555"/>' + tri],
  ['파동', p('M5 9v9l4-6 4 4 4-6v8') + p('M6 9V3M4 5l2-2 2 2', R) + p('M13 3v6M11 7l2 2 2-2', B) + tri],
  ['채널', p('M5 6h12M5 16h12M16 6L7 16') + p('M5 11h12', B) + tri],
  ['각도선', `<text x="2" y="8" font-size="8" font-weight="bold" fill="${R}">G</text>` + p('M7 17L18 6') + tri],
  ['부채꼴', p('M4 17L8 4M4 17l9-12M4 17L17 8') + p('M4 17h13', B) + tri],
  ['평행선', p('M4 10l6-6M4 15L15 4M8 16l9-9') + tri],
  ['주기선', p('M5 5v12M9 5v12M13 5v12M17 5v12M3 12L18 8', '#a84a38') + tri],
  ['회귀선', p('M4 17l5-8 2 5 6-10M5 13v4M9 9v6M13 7v6M17 3v6', B)],
  ['회귀채널', p('M3 12L17 3M4 18L18 9M5 9v9M9 7v9M13 5v8M17 3v8M4 15L17 6', B)],
  ['자유곡선', p('M4 14l4-4 4 4 5-5')],
  ['가격선', p('M8 6h10M10 11h8M6 16h12') + p('M5 15l4-4', B) + `<rect x="7" y="9" width="3" height="3" fill="${B}"/><rect x="3" y="14" width="3" height="3" fill="${R}"/>`],
  ['자동', p('M3 7l4-3 4 4 7-6') + `<text x="1" y="16" font-size="7" font-weight="bold" fill="${R}">AUTO</text>` + tri],
  ['창', p('M4 5h13v11H4z', G, '#fff') + p('M4 6h13', G, 'none', 2) + `<path d="M6 8h5l-5 5z" fill="${R}"/>` + tri],
  ['문서', p('M8 4h8v13H5V7zM8 9h6M8 11h6M8 14h6M5 7h3V4', G, '#fff')],
  ['지표', p('M4 4v13h14M7 12v5M10 14v3M13 12v5M16 9v8') + p('M5 11l4-5 3 4 5-6', R)],
  ['주기', '<g font-size="8" fill="#555"><text x="4" y="9">D</text><text x="11" y="9">W</text><text x="4" y="18">M</text><text x="12" y="18">Y</text></g>' + p('M10.500 3v15M4 10.500h14')],
  ['환경설정', p('M5 4l4 3-2 3-4-2a4 4 0 0 0 6 3l6 7 3-3-7-6a4 4 0 0 0-5-5z', G, '#eee') + tri]
];
document.getElementById('drawTools').innerHTML = tools.map(([n, s]) => `<button aria-label="${n}"><svg width="22" height="20" viewBox="0 0 22 20">${s}</svg></button>`).join('');
```
